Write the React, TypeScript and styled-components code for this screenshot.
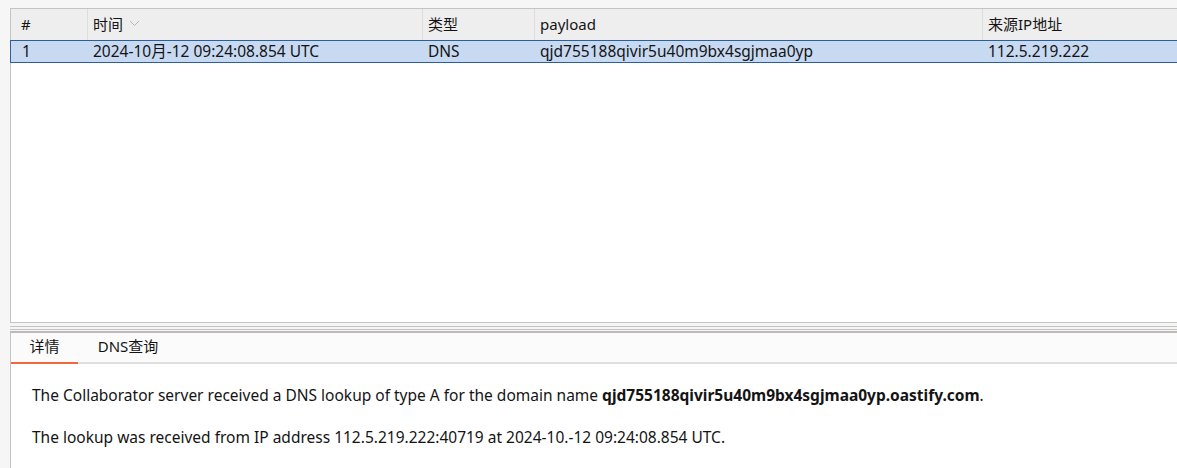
import React from 'react'
import styled, { createGlobalStyle } from 'styled-components'

const GlobalStyle = createGlobalStyle`
  html, body {
    margin: 0;
    padding: 0;
    background: #f6f6f6;
    overflow: hidden;
  }
  body {
    font-family: 'Noto Sans', 'Noto Sans CJK SC', sans-serif;
    color: #141414;
  }
`

const Page = styled.div`
  width: 1177px;
  height: 468px;
  padding: 8px 0 0 10px;
  box-sizing: border-box;
  display: flex;
  flex-direction: column;
  overflow: hidden;
`

const TablePane = styled.div`
  width: 1200px;
  height: 315px;
  box-sizing: border-box;
  border: 1px solid #c4c4c4;
  border-right: none;
  background: #ffffff;
  flex-shrink: 0;
`

const Grid = styled.div`
  display: grid;
  grid-template-columns: 77px 335px 112px 448px 220px;
`

const HeaderCell = styled.div<{ $first?: boolean }>`
  height: 31px;
  box-sizing: border-box;
  background: #eeeeee;
  border-right: 1px solid #dddddd;
  padding-left: ${(p) => (p.$first ? '10px' : '5px')};
  padding-bottom: 2px;
  display: flex;
  align-items: center;
  gap: 6px;
  font-size: 15px;
`

const SelectedRow = styled.div`
  grid-column: 1 / -1;
  display: grid;
  grid-template-columns: subgrid;
  height: 23px;
  box-sizing: border-box;
  background: #c8daf1;
  border-top: 1px solid #2d5e99;
  border-bottom: 1px solid #2d5e99;
  border-left: 1px solid #2d5e99;
  margin-left: -1px;
`

const Cell = styled.div<{ $first?: boolean }>`
  padding-left: ${(p) => (p.$first ? '11px' : '5px')};
  font-size: 15.5px;
  line-height: 21px;
  white-space: nowrap;
`

const Splitter = styled.div`
  height: 7px;
  width: 1200px;
  box-sizing: border-box;
  border-bottom: 1px solid #c7c2c2;
  position: relative;
  flex-shrink: 0;
  &::before {
    content: '';
    position: absolute;
    left: 0;
    right: 0;
    top: 3px;
    border-top: 1px solid #c7c2c2;
  }
`

const DetailPane = styled.div`
  margin-top: 1px;
  flex: 1;
  width: 1200px;
  box-sizing: border-box;
  border-top: 2px solid #bfb8b8;
  border-left: 1px solid #c4c4c4;
  background: #ffffff;
  display: flex;
  flex-direction: column;
`

const TabBar = styled.div`
  display: flex;
  height: 29px;
  background: #fbfbfb;
  border-bottom: 2px solid #dedede;
`

const Tab = styled.div<{ $active?: boolean; $width: number }>`
  width: ${(p) => p.$width}px;
  box-sizing: border-box;
  display: flex;
  align-items: center;
  justify-content: center;
  padding-bottom: 5px;
  font-size: 15px;
  border-bottom: 2px solid ${(p) => (p.$active ? '#f2683c' : 'transparent')};
  margin-bottom: -2px;
`

const Content = styled.div`
  padding: 20px 0 0 21px;
  display: flex;
  flex-direction: column;
  gap: 20px;
`

const Para = styled.p`
  margin: 0;
  font-size: 15.5px;
  line-height: 22px;
  white-space: nowrap;
`

const SortArrow = () => (
  <svg width="11" height="7" viewBox="0 0 11 7" fill="none">
    <path d="M1 1l4.5 4.5L10 1" stroke="#b5b5b5" strokeWidth="1" />
  </svg>
)

const columns = ['#', '时间', '类型', 'payload', '来源IP地址']
const row = ['1', '2024-10月-12 09:24:08.854 UTC', 'DNS', 'qjd755188qivir5u40m9bx4sgjmaa0yp', '112.5.219.222']

export default function App() {
  return (
    <>
      <GlobalStyle />
      <Page>
        <TablePane>
          <Grid>
            {columns.map((c, i) => (
              <HeaderCell key={c} $first={i === 0}>
                {c}
                {c === '时间' && <SortArrow />}
              </HeaderCell>
            ))}
            <SelectedRow>
              {row.map((v, i) => (
                <Cell key={i} $first={i === 0}>
                  {v}
                </Cell>
              ))}
            </SelectedRow>
          </Grid>
        </TablePane>
        <Splitter />
        <DetailPane>
          <TabBar>
            <Tab $active $width={67}>详情</Tab>
            <Tab $width={100}>DNS查询</Tab>
          </TabBar>
          <Content>
            <Para>
              The Collaborator server received a DNS lookup of type A for the domain name{' '}
              <b>qjd755188qivir5u40m9bx4sgjmaa0yp.oastify.com</b>.
            </Para>
            <Para>The lookup was received from IP address 112.5.219.222:40719 at 2024-10.-12 09:24:08.854 UTC.</Para>
          </Content>
        </DetailPane>
      </Page>
    </>
  )
}
